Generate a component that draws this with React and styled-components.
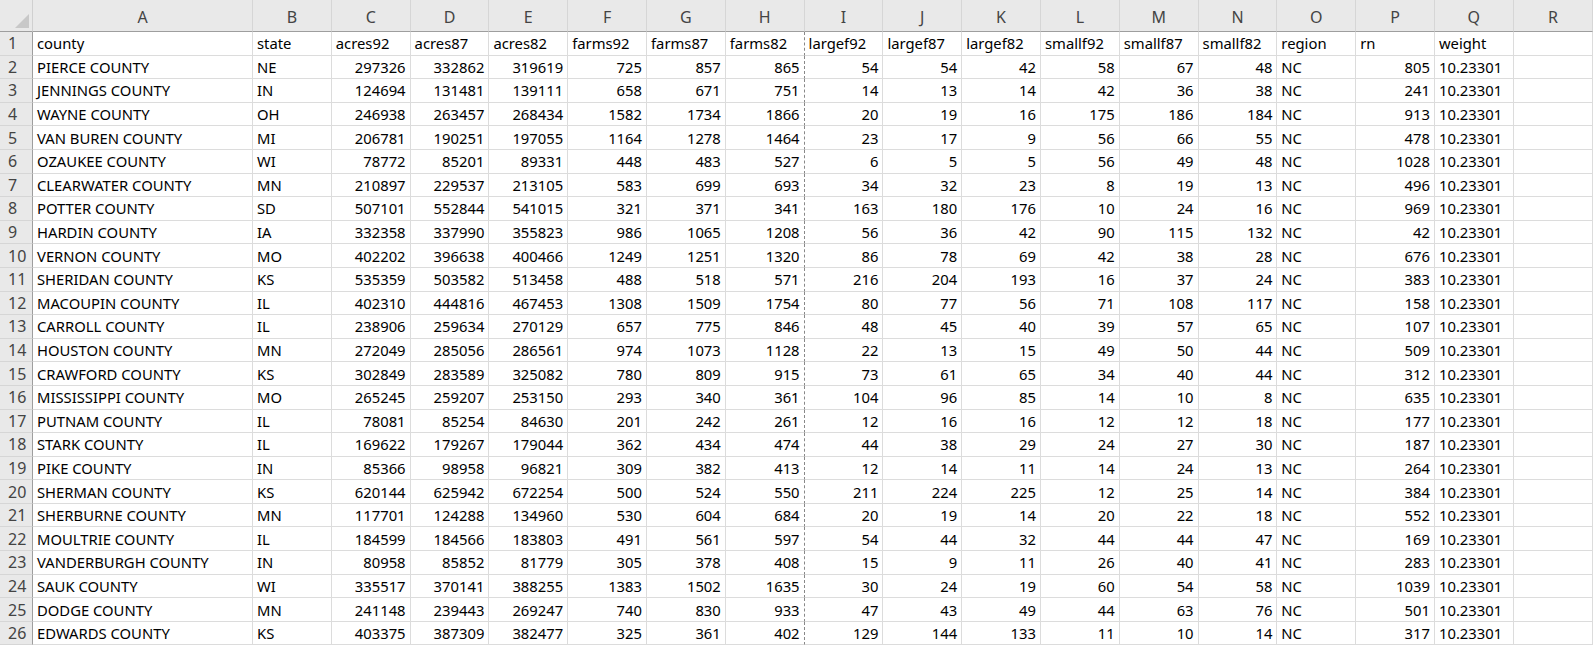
import React from "react";
import styled, { createGlobalStyle } from "styled-components";

const G = createGlobalStyle`
  body{margin:0;background:#fff;font-family:"Noto Sans","Open Sans",sans-serif;overflow:hidden;}
`;

const cols = "ABCDEFGHIJKLMNOPQR".split("");
const headers = ["county","state","acres92","acres87","acres82","farms92","farms87","farms82","largef92","largef87","largef82","smallf92","smallf87","smallf82","region","rn","weight"];
const raw = `PIERCE COUNTY|NE|297326|332862|319619|725|857|865|54|54|42|58|67|48|NC|805
JENNINGS COUNTY|IN|124694|131481|139111|658|671|751|14|13|14|42|36|38|NC|241
WAYNE COUNTY|OH|246938|263457|268434|1582|1734|1866|20|19|16|175|186|184|NC|913
VAN BUREN COUNTY|MI|206781|190251|197055|1164|1278|1464|23|17|9|56|66|55|NC|478
OZAUKEE COUNTY|WI|78772|85201|89331|448|483|527|6|5|5|56|49|48|NC|1028
CLEARWATER COUNTY|MN|210897|229537|213105|583|699|693|34|32|23|8|19|13|NC|496
POTTER COUNTY|SD|507101|552844|541015|321|371|341|163|180|176|10|24|16|NC|969
HARDIN COUNTY|IA|332358|337990|355823|986|1065|1208|56|36|42|90|115|132|NC|42
VERNON COUNTY|MO|402202|396638|400466|1249|1251|1320|86|78|69|42|38|28|NC|676
SHERIDAN COUNTY|KS|535359|503582|513458|488|518|571|216|204|193|16|37|24|NC|383
MACOUPIN COUNTY|IL|402310|444816|467453|1308|1509|1754|80|77|56|71|108|117|NC|158
CARROLL COUNTY|IL|238906|259634|270129|657|775|846|48|45|40|39|57|65|NC|107
HOUSTON COUNTY|MN|272049|285056|286561|974|1073|1128|22|13|15|49|50|44|NC|509
CRAWFORD COUNTY|KS|302849|283589|325082|780|809|915|73|61|65|34|40|44|NC|312
MISSISSIPPI COUNTY|MO|265245|259207|253150|293|340|361|104|96|85|14|10|8|NC|635
PUTNAM COUNTY|IL|78081|85254|84630|201|242|261|12|16|16|12|12|18|NC|177
STARK COUNTY|IL|169622|179267|179044|362|434|474|44|38|29|24|27|30|NC|187
PIKE COUNTY|IN|85366|98958|96821|309|382|413|12|14|11|14|24|13|NC|264
SHERMAN COUNTY|KS|620144|625942|672254|500|524|550|211|224|225|12|25|14|NC|384
SHERBURNE COUNTY|MN|117701|124288|134960|530|604|684|20|19|14|20|22|18|NC|552
MOULTRIE COUNTY|IL|184599|184566|183803|491|561|597|54|44|32|44|44|47|NC|169
VANDERBURGH COUNTY|IN|80958|85852|81779|305|378|408|15|9|11|26|40|41|NC|283
SAUK COUNTY|WI|335517|370141|388255|1383|1502|1635|30|24|19|60|54|58|NC|1039
DODGE COUNTY|MN|241148|239443|269247|740|830|933|47|43|49|44|63|76|NC|501
EDWARDS COUNTY|KS|403375|387309|382477|325|361|402|129|144|133|11|10|14|NC|317`;
const rows = raw.split("\n").map(l => [...l.split("|"), "10.23301"]);

const Grid = styled.div`
  display:grid;
  grid-template-columns:33px 220px repeat(16, 78.8px) 1fr;
  grid-template-rows:32px repeat(26, 23.6px);
  width:1593px;height:658px;overflow:hidden;
  font-size:14.8px;color:#000;
  & > *{box-sizing:border-box;}
`;
const Corner = styled.div`
  background:#e9e9e9;border-right:1px solid #d0d0d0;border-bottom:1px solid #9e9e9e;
  position:relative;
  &::after{content:"";position:absolute;right:3px;bottom:3px;width:0;height:0;
    border-left:14px solid transparent;border-bottom:14px solid #c8c8c8;}
`;
const ColHead = styled.div`
  background:#e9e9e9;color:#444;font-size:16px;display:flex;align-items:flex-end;justify-content:center;
  padding-bottom:3px;border-right:1px solid #d6d6d6;border-bottom:1px solid #9e9e9e;
`;
const RowHead = styled.div`
  background:#e9e9e9;color:#444;font-size:16px;display:flex;align-items:center;padding-left:8px;
  border-right:1px solid #9e9e9e;border-bottom:1px solid #d6d6d6;
`;
const Cell = styled.div`
  display:flex;align-items:center;justify-content:${p=>p.$num?"flex-end":"flex-start"};
  padding:0 4px;white-space:nowrap;overflow:hidden;min-width:0;
  border-bottom:1px solid #dcdcdc;
  border-right:1px ${p=>p.$dash?"dashed #888":"solid #dcdcdc"};
`;

export default function App(){
  return (<><G/><Grid>
    <Corner/>
    {cols.map(c=><ColHead key={c}>{c}</ColHead>)}
    <RowHead>1</RowHead>
    {headers.map((h,i)=><Cell key={h} $dash={i===7}>{h}</Cell>)}
    <Cell/>
    {rows.map((r,ri)=>(
      <React.Fragment key={ri}>
        <RowHead>{ri+2}</RowHead>
        {r.map((v,i)=><Cell key={i} $num={i!==16 && i>=2 && i!==14} $dash={i===7}>{v}</Cell>)}
        <Cell/>
      </React.Fragment>
    ))}
  </Grid></>);
}
